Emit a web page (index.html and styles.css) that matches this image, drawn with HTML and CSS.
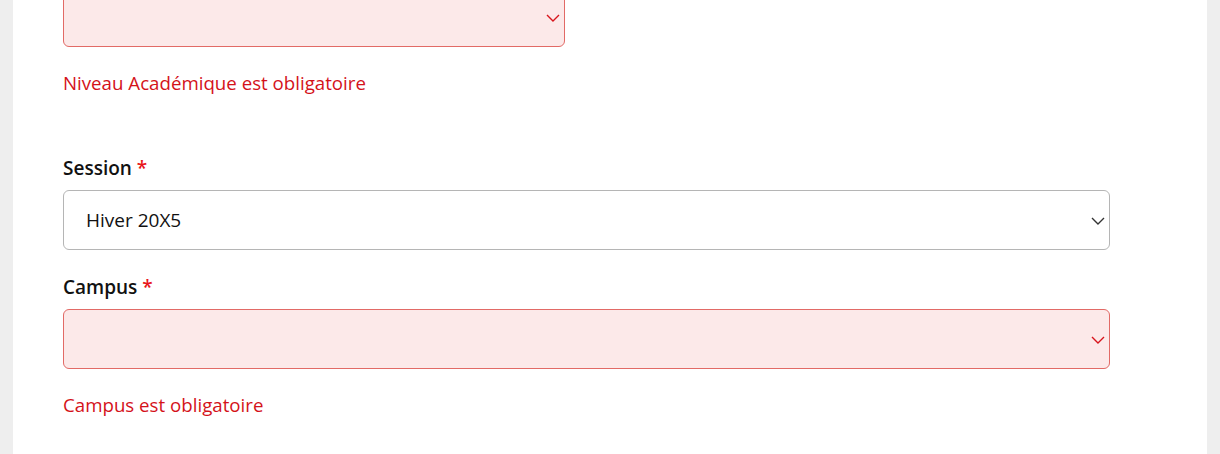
FILE: index.html
```html
<!DOCTYPE html>
<html lang="fr">

<head>
  <meta charset="UTF-8">
  <meta name="viewport" content="width=device-width, initial-scale=1.0">
  <title>Inscription</title>
  <link rel="stylesheet" href="styles.css">
</head>

<body>
  <div class="page">
    <form class="card">
      <div class="form-group has-error">
        <div class="select-wrap short">
          <select id="niveau" name="niveau" class="invalid">
            <option value=""></option>
          </select>
          <svg class="chevron red" viewBox="0 0 14 8" width="14" height="8"><path d="M1 1l6 6 6-6" /></svg>
        </div>
        <p class="error">Niveau Académique est obligatoire</p>
      </div>

      <div class="form-group">
        <label for="session">Session <span class="req">*</span></label>
        <div class="select-wrap">
          <select id="session" name="session">
            <option value="h5">Hiver 20X5</option>
          </select>
          <svg class="chevron" viewBox="0 0 14 8" width="14" height="8"><path d="M1 1l6 6 6-6" /></svg>
        </div>
      </div>

      <div class="form-group has-error">
        <label for="campus">Campus <span class="req">*</span></label>
        <div class="select-wrap">
          <select id="campus" name="campus" class="invalid">
            <option value=""></option>
          </select>
          <svg class="chevron red" viewBox="0 0 14 8" width="14" height="8"><path d="M1 1l6 6 6-6" /></svg>
        </div>
        <p class="error">Campus est obligatoire</p>
      </div>
    </form>
  </div>
</body>

</html>
```

FILE: styles.css
```css
body {
  font-family: "Open Sans", "Noto Sans", sans-serif;
  background-color: #eeeeee;
  margin: 0;
  overflow: hidden;
}

.page {
  padding: 0 13px 0 13px;
}

.card {
  background-color: #fff;
  padding: 0 50px 35px 50px;
  margin-top: -13px;
}

.form-group {
  display: flex;
  flex-direction: column;
  margin-bottom: 24px;
}

.form-group.has-error {
  margin-bottom: 58px;
}

.form-group:last-child {
  margin-bottom: 0;
}

label {
  display: block;
  font-size: 19px;
  line-height: 26px;
  font-weight: 600;
  color: #111;
  margin-bottom: 9px;
}

.req {
  color: #e8161b;
}

.select-wrap {
  position: relative;
  width: 1047px;
}

.select-wrap.short {
  width: 502px;
}

select {
  appearance: none;
  -webkit-appearance: none;
  display: block;
  width: 100%;
  height: 60px;
  padding: 0 40px 0 22px;
  font-family: inherit;
  font-size: 19px;
  color: #111;
  background-color: #fff;
  border: 1px solid #b5b5b5;
  border-radius: 6px;
  outline: none;
}

select.invalid {
  background-color: #fce9e9;
  border-color: #e26a66;
}

.chevron {
  position: absolute;
  right: 5px;
  top: 50%;
  margin-top: -3px;
  fill: none;
  stroke: #333;
  stroke-width: 1.4;
  pointer-events: none;
}

.chevron.red {
  stroke: #d8141c;
}

.error {
  margin: 22px 0 0 0;
  font-size: 18.7px;
  line-height: 28px;
  color: #d4121a;
}
```
